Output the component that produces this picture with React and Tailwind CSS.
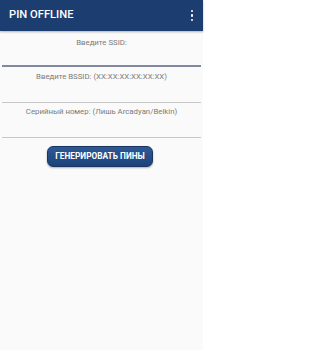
export default function App() {
  return (
    <div className="w-[203px] min-h-[350px] bg-[#fafafa] font-['Roboto',sans-serif]">
      <header className="h-[31px] bg-[#1b3d6f] flex items-center justify-between pl-[9px] pr-[10px] shadow-[0_1px_2px_rgba(0,0,0,0.3)]">
        <h1 className="text-white text-[11.2px] font-medium">PIN OFFLINE</h1>
        <div className="flex flex-col gap-[2px]">
          <span className="w-[2.5px] h-[2.5px] bg-white rounded-full" />
          <span className="w-[2.5px] h-[2.5px] bg-white rounded-full" />
          <span className="w-[2.5px] h-[2.5px] bg-white rounded-full" />
        </div>
      </header>

      <div className="px-[2px]">
        <div className="pt-[8px]">
          <p className="text-center text-[7.8px] leading-[8px] text-[#7a7a7a]">Введите SSID:</p>
          <div className="h-[20px] border-b-2 border-[#7f8aa0]" />
        </div>
        <div className="pt-[6px]">
          <p className="text-center text-[7.8px] leading-[8px] text-[#7a7a7a]">Введите BSSID: (XX:XX:XX:XX:XX:XX)</p>
          <div className="h-[22px] border-b border-[#c8c8c8]" />
        </div>
        <div className="pt-[5px]">
          <p className="text-center text-[7.8px] leading-[8px] text-[#7a7a7a]">Серийный номер: (Лишь Arcadyan/Belkin)</p>
          <div className="h-[22px] border-b border-[#c8c8c8]" />
        </div>
      </div>

      <div className="flex justify-center pt-[8px] pr-[3px]">
        <button className="h-[21px] w-[106px] rounded-[6px] border border-[#1a3560] bg-gradient-to-b from-[#2d5a96] to-[#1d427a] text-white text-[8.3px] font-bold shadow-[0_1px_2px_rgba(0,0,0,0.3)]">
          ГЕНЕРИРОВАТЬ ПИНЫ
        </button>
      </div>
    </div>
  );
}
